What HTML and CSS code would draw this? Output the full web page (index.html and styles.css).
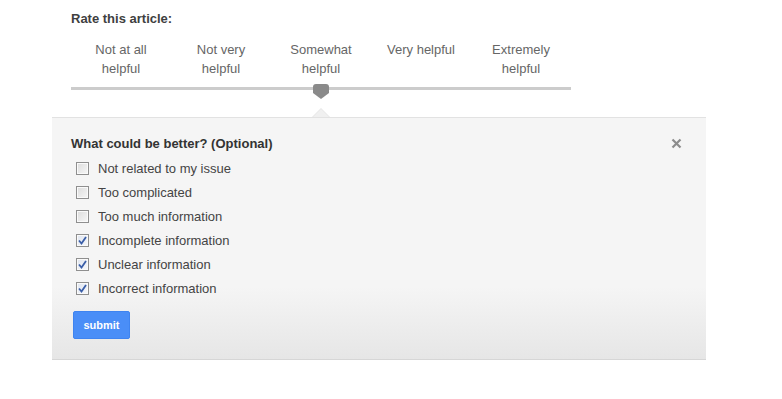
FILE: index.html
```html
<html>
    <head>
        <title>Rate this article</title>
        <link rel="stylesheet" href="styles.css">
    </head>
    <body>
        <div class="rating">
            <div class="title">Rate this article:</div>

            <div class="scale">
                <div class="step">Not at all<br />helpful</div>
                <div class="step">Not very<br />helpful</div>
                <div class="step">Somewhat<br />helpful</div>
                <div class="step">Very helpful</div>
                <div class="step">Extremely<br />helpful</div>
            </div>

            <div class="slider">
                <div class="track"></div>
                <svg class="handle" width="18" height="17" viewBox="0 0 18 17">
                    <path d="M1 4 Q1 1 4 1 L14 1 Q17 1 17 4 L17 10 L9 16 L1 10 Z" fill="#8a8a8a"/>
                </svg>
            </div>
        </div>

        <div class="panel">
            <span class="notch"></span>
            <svg class="close" width="11" height="11" viewBox="0 0 11 11">
                <path d="M1.5 1.5 L9.5 9.5 M9.5 1.5 L1.5 9.5" stroke="#8c8c8c" stroke-width="2.2"/>
            </svg>

            <div class="question">What could be better? (Optional)</div>

            <div class="option"><span class="box"></span>Not related to my issue</div>
            <div class="option"><span class="box"></span>Too complicated</div>
            <div class="option"><span class="box"></span>Too much information</div>
            <div class="option"><span class="box checked"><svg width="11" height="11" viewBox="0 0 11 11"><path d="M2 5.5 L4.5 8.5 L9 2" stroke="#3a5ea8" stroke-width="1.8" fill="none"/></svg></span>Incomplete information</div>
            <div class="option"><span class="box checked"><svg width="11" height="11" viewBox="0 0 11 11"><path d="M2 5.5 L4.5 8.5 L9 2" stroke="#3a5ea8" stroke-width="1.8" fill="none"/></svg></span>Unclear information</div>
            <div class="option"><span class="box checked"><svg width="11" height="11" viewBox="0 0 11 11"><path d="M2 5.5 L4.5 8.5 L9 2" stroke="#3a5ea8" stroke-width="1.8" fill="none"/></svg></span>Incorrect information</div>

            <button class="submit">submit</button>
        </div>
    </body>
</html>
```

FILE: styles.css
```css
body {
    margin: 0;
    background: #fff;
    font-family: "Liberation Sans", Arial, sans-serif;
    font-size: 13px;
    color: #333;
}

.rating {
    padding: 11px 0 0 71px;
}

.title {
    font-weight: bold;
    line-height: 15px;
    color: #404040;
}

.scale {
    display: flex;
    margin-top: 14px;
}

.step {
    width: 100px;
    text-align: center;
    line-height: 19px;
    color: #666;
}

.slider {
    position: relative;
    width: 500px;
    height: 30px;
    margin-top: 5px;
    padding-top: 4px;
}

.track {
    height: 3px;
    background: #ccc;
}

.handle {
    position: absolute;
    left: 241px;
    top: 0;
}

.panel {
    position: relative;
    width: 635px;
    margin: 0 0 0 52px;
    padding: 14px 0 20px 19px;
    border-top: 1px solid #e2e2e2;
    border-bottom: 1px solid #d6d6d6;
    background: linear-gradient(#f5f5f5 0%, #f5f5f5 70%, #e6e6e6 100%);
}

.notch {
    position: absolute;
    left: 260px;
    top: -10px;
    width: 0;
    height: 0;
    border-left: 9px solid transparent;
    border-right: 9px solid transparent;
    border-bottom: 9px solid #e6e6e6;
}

.notch:after {
    content: "";
    position: absolute;
    left: -8px;
    top: 1px;
    border-left: 8px solid transparent;
    border-right: 8px solid transparent;
    border-bottom: 8px solid #f0f0f0;
}

.close {
    position: absolute;
    right: 24px;
    top: 20px;
}

.question {
    font-weight: bold;
    line-height: 24px;
    color: #333;
}

.option {
    display: flex;
    align-items: center;
    height: 24px;
    color: #444;
}

.box {
    display: inline-flex;
    align-items: center;
    justify-content: center;
    box-sizing: border-box;
    width: 13px;
    height: 13px;
    margin: 0 9px 0 5px;
    border: 1px solid #8f8f8f;
    background: linear-gradient(135deg, #dcdcdc, #f7f7f7);
    box-shadow: inset 0 0 0 1px #fafafa;
}

.box.checked {
    background: linear-gradient(135deg, #dfe5f0, #f7f8fb);
}

.submit {
    display: block;
    margin: 11px 0 0 2px;
    width: 57px;
    height: 28px;
    padding: 0;
    border: 1px solid #3f84f0;
    border-radius: 2px;
    background: #4a8ef7;
    color: #fff;
    font-family: "Liberation Sans", Arial, sans-serif;
    font-size: 11px;
    font-weight: bold;
}
```
